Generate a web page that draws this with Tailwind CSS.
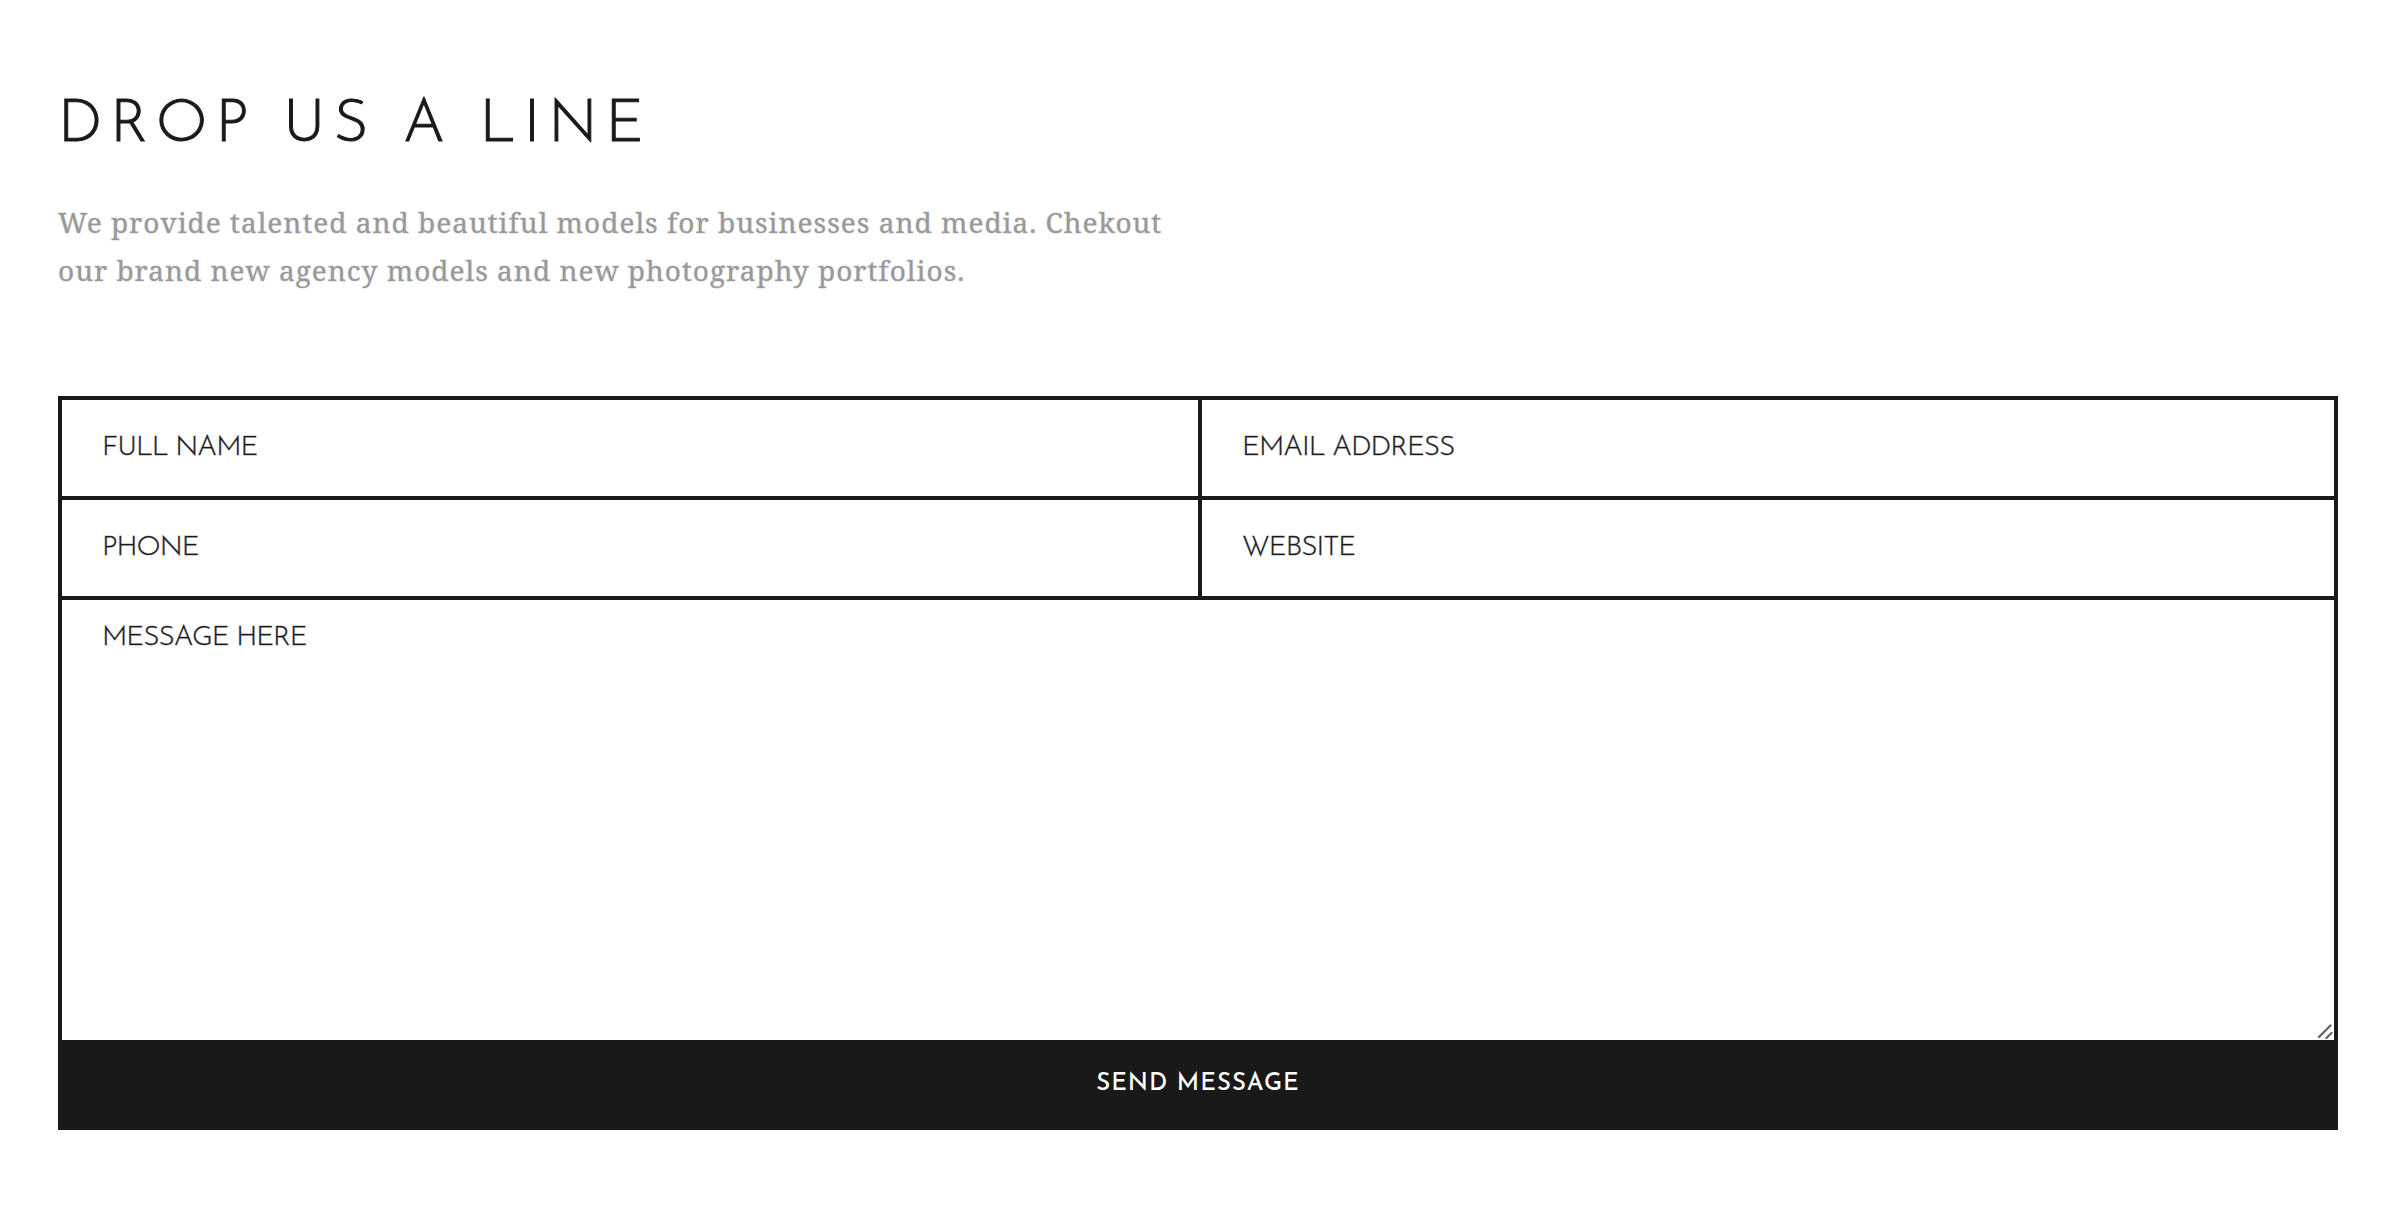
<!DOCTYPE html>
<html lang="en">
<head>
<meta charset="utf-8">
<meta name="viewport" content="width=device-width, initial-scale=1">
<title>Drop us a line</title>
<script src="https://cdn.jsdelivr.net/npm/@tailwindcss/browser@4"></script>
</head>
<body class="bg-white pr-[60px] pl-[58px] pt-[90px] text-[#191919] font-['Josefin_Sans','Lato',sans-serif]">
<main>
  <h1 class="text-[60px] leading-[72px] font-light tracking-[8px] uppercase [-webkit-text-stroke:1px_#191919]">Drop us a line</h1>
  <p class="mt-9 max-w-[1140px] text-[28px] leading-[48px] font-normal tracking-[1px] text-[#999] [-webkit-text-stroke:1px_#99999966] font-['Droid_Serif','Noto_Serif','DejaVu_Serif_Condensed','DejaVu_Serif',serif]">We provide talented and beautiful models for businesses and media. Chekout our brand new agency models and new photography portfolios.</p>
  <form class="mt-[102px] border-4 border-[#191919] bg-[#191919]">
    <div class="grid grid-cols-[50%_1fr] gap-1 [-webkit-text-stroke:1px_#19191966]">
      <input type="text" aria-label="Full name" placeholder="FULL NAME" class="h-24 min-w-0 bg-white px-10 text-[28px] font-light tracking-[-1px] outline-none placeholder:text-[#191919]">
      <input type="email" aria-label="Email address" placeholder="EMAIL ADDRESS" class="h-24 min-w-0 bg-white px-10 text-[28px] font-light tracking-[-1px] outline-none placeholder:text-[#191919]">
      <input type="tel" aria-label="Phone" placeholder="PHONE" class="h-24 min-w-0 bg-white px-10 text-[28px] font-light tracking-[-1px] outline-none placeholder:text-[#191919]">
      <input type="url" aria-label="Website" placeholder="WEBSITE" class="h-24 min-w-0 bg-white px-10 text-[28px] font-light tracking-[-1px] outline-none placeholder:text-[#191919]">
      <div class="relative col-span-2">
        <textarea aria-label="Message" placeholder="MESSAGE HERE" class="block h-[440px] w-full resize-none bg-white px-10 py-5 text-[28px] leading-9 font-light tracking-[-1px] outline-none placeholder:text-[#191919]"></textarea>
        <svg class="pointer-events-none absolute right-0 bottom-0 size-5" viewBox="0 0 20 20" fill="none" stroke="#666" stroke-width="2.4" stroke-linecap="round"><path d="M5 17 16.500 5.500M12.500 18l5-5"/></svg>
      </div>
    </div>
    <button type="submit" class="block h-[86px] w-full pt-0.5 text-center text-[24px] font-medium tracking-[1px] text-white">SEND MESSAGE</button>
  </form>
</main>
</body>
</html>
